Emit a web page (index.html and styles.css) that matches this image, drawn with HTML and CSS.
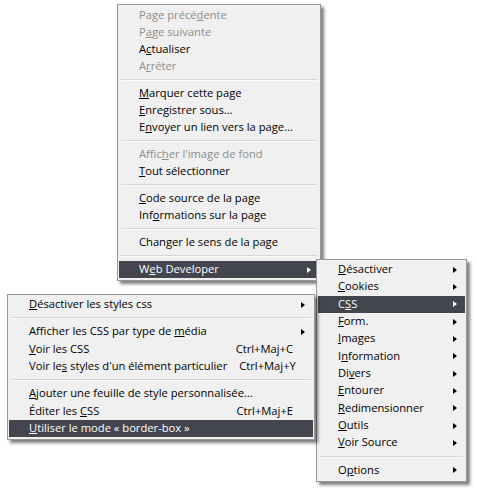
FILE: index.html
```html
<!DOCTYPE html>
<html lang="fr">
<head>
<meta charset="utf-8">
<title>Menu contextuel</title>
<link rel="stylesheet" href="styles.css">
</head>
<body>
<div class="desk">
  <div class="menu m1">
    <div class="item dis"><span class="lbl">Page précé<u>d</u>ente</span></div>
    <div class="item dis"><span class="lbl">P<u>a</u>ge suivante</span></div>
    <div class="item"><span class="lbl">A<u>c</u>tualiser</span></div>
    <div class="item dis"><span class="lbl">A<u>r</u>rêter</span></div>
    <div class="sep"></div>
    <div class="item"><span class="lbl"><u>M</u>arquer cette page</span></div>
    <div class="item"><span class="lbl"><u>E</u>nregistrer sous…</span></div>
    <div class="item"><span class="lbl">E<u>n</u>voyer un lien vers la page…</span></div>
    <div class="sep"></div>
    <div class="item dis"><span class="lbl">Affic<u>h</u>er l'image de fond</span></div>
    <div class="item"><span class="lbl"><u>T</u>out sélectionner</span></div>
    <div class="sep"></div>
    <div class="item"><span class="lbl"><u>C</u>ode source de la page</span></div>
    <div class="item"><span class="lbl">Inf<u>o</u>rmations sur la page</span></div>
    <div class="sep"></div>
    <div class="item"><span class="lbl">Chan<u>g</u>er le sens de la page</span></div>
    <div class="sep"></div>
    <div class="item sel"><span class="lbl">W<u>e</u>b Developer</span><span class="arr"></span></div>
  </div>

  <div class="menu m2">
    <div class="item"><span class="lbl"><u>D</u>ésactiver</span><span class="arr"></span></div>
    <div class="item"><span class="lbl"><u>C</u>ookies</span><span class="arr"></span></div>
    <div class="item sel"><span class="lbl">C<u>S</u>S</span><span class="arr"></span></div>
    <div class="item"><span class="lbl"><u>F</u>orm.</span><span class="arr"></span></div>
    <div class="item"><span class="lbl"><u>I</u>mages</span><span class="arr"></span></div>
    <div class="item"><span class="lbl">I<u>n</u>formation</span><span class="arr"></span></div>
    <div class="item"><span class="lbl">Di<u>v</u>ers</span><span class="arr"></span></div>
    <div class="item"><span class="lbl"><u>E</u>ntourer</span><span class="arr"></span></div>
    <div class="item"><span class="lbl"><u>R</u>edimensionner</span><span class="arr"></span></div>
    <div class="item"><span class="lbl"><u>O</u>utils</span><span class="arr"></span></div>
    <div class="item"><span class="lbl"><u>V</u>oir Source</span><span class="arr"></span></div>
    <div class="sep"></div>
    <div class="item"><span class="lbl">O<u>p</u>tions</span><span class="arr"></span></div>
  </div>

  <div class="menu m3">
    <div class="item"><span class="lbl"><u>D</u>ésactiver les styles css</span><span class="arr"></span></div>
    <div class="sep"></div>
    <div class="item"><span class="lbl">Afficher les CSS par type de <u>m</u>édia</span><span class="arr"></span></div>
    <div class="item"><span class="lbl"><u>V</u>oir les CSS</span><span class="key">Ctrl+Maj+C</span><span class="arr none"></span></div>
    <div class="item"><span class="lbl">Voir le<u>s</u> styles d'un élément particulier</span><span class="key">Ctrl+Maj+Y</span><span class="arr none"></span></div>
    <div class="sep"></div>
    <div class="item"><span class="lbl"><u>A</u>jouter une feuille de style personnalisée…</span><span class="arr none"></span></div>
    <div class="item"><span class="lbl">Éditer les <u>C</u>SS</span><span class="key">Ctrl+Maj+E</span><span class="arr none"></span></div>
    <div class="item sel"><span class="lbl"><u>U</u>tiliser le mode «&nbsp;border-box&nbsp;»</span><span class="arr none"></span></div>
  </div>
</div>
</body>
</html>
```

FILE: styles.css
```css
html, body {
  margin: 0;
  padding: 0;
  background: #ffffff;
}

body {
  font-family: "Open Sans", "Noto Sans", sans-serif;
  font-size: 11.2px;
  color: #000;
}

.desk {
  position: relative;
  width: 477px;
  height: 492px;
  overflow: hidden;
}

.menu {
  position: absolute;
  box-sizing: border-box;
  background: #f0f0f0;
  border: 1px solid #979797;
  padding: 2px 1px;
  box-shadow: 3px 3px 3px rgba(0, 0, 0, 0.5);
}

.m1 {
  left: 117px;
  top: 4px;
  width: 204px;
  height: 277px;
  z-index: 1;
}

.m2 {
  left: 316px;
  top: 259px;
  width: 151px;
  padding-top: 1px;
  z-index: 2;
}

.m3 {
  left: 7px;
  top: 294px;
  width: 308px;
  padding-top: 1px;
  z-index: 3;
}

.item {
  display: flex;
  align-items: center;
  box-sizing: border-box;
  height: 17px;
  padding-left: 20px;
  padding-bottom: 2px;
  white-space: nowrap;
}

.m2 .item,
.m3 .item {
  height: 17.33px;
}

.item u {
  text-decoration: underline;
  text-underline-offset: 1px;
}

.lbl {
  flex: 1;
}

.key {
  margin-left: 12px;
  margin-right: 1px;
}

.arr {
  width: 0;
  height: 0;
  border-left: 4px solid #000;
  border-top: 3.5px solid transparent;
  border-bottom: 3.5px solid transparent;
  margin: 2px 8px 0 7px;
}

.arr.none {
  border-left-color: transparent;
}

.dis {
  color: #8d8d8d;
}

.sel {
  background: #43464f;
  color: #fff;
}

.sel .arr {
  border-left-color: #fff;
}

.sel .arr.none {
  border-left-color: transparent;
}

.sep {
  height: 1px;
  margin: 4px 2px;
  background: #d6d6d6;
  border-bottom: 1px solid #fbfbfb;
}
```
